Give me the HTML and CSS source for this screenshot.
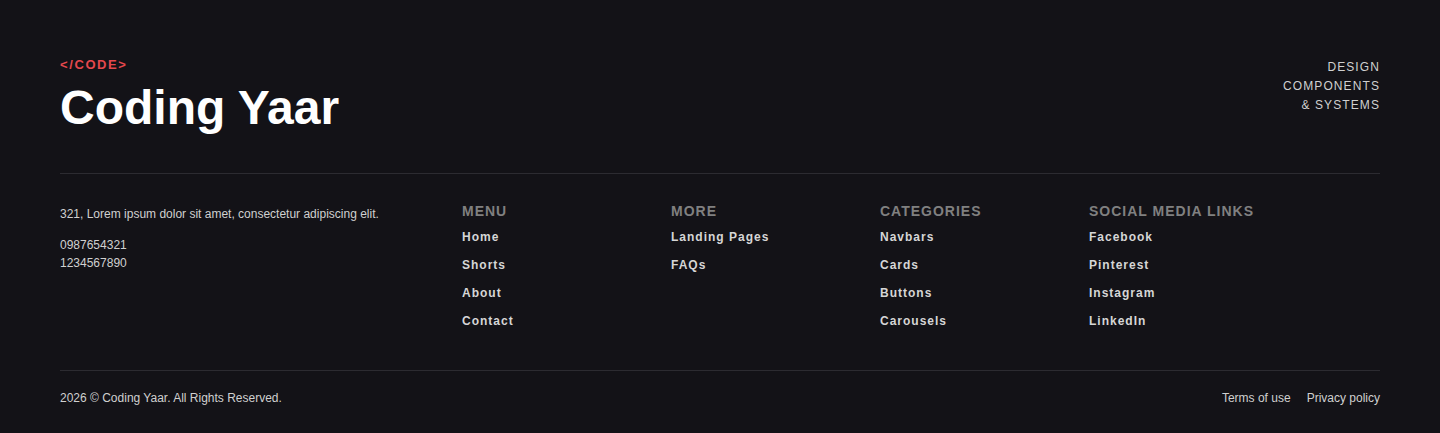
FILE: index.html
```html
<!DOCTYPE html>
<html lang="en">
<head>
<meta charset="utf-8">
<title>Coding Yaar Footer</title>
<link rel="stylesheet" href="styles.css">
</head>
<body>
<footer class="footer">
  <div class="top">
    <div class="brand">
      <div class="tag">&lt;/CODE&gt;</div>
      <div class="name">Coding Yaar</div>
    </div>
    <div class="tagline">DESIGN<br>COMPONENTS<br>&amp; SYSTEMS</div>
  </div>
  <hr class="rule">
  <div class="cols">
    <div class="contact">
      <p class="addr">321, Lorem ipsum dolor sit amet, consectetur adipiscing elit.</p>
      <p class="phones">0987654321<br>1234567890</p>
    </div>
    <div class="col">
      <h4>MENU</h4>
      <a>Home</a><a>Shorts</a><a>About</a><a>Contact</a>
    </div>
    <div class="col">
      <h4>MORE</h4>
      <a>Landing Pages</a><a>FAQs</a>
    </div>
    <div class="col">
      <h4>CATEGORIES</h4>
      <a>Navbars</a><a>Cards</a><a>Buttons</a><a>Carousels</a>
    </div>
    <div class="col">
      <h4>SOCIAL MEDIA LINKS</h4>
      <a>Facebook</a><a>Pinterest</a><a>Instagram</a><a>LinkedIn</a>
    </div>
  </div>
  <hr class="rule">
  <div class="bottom">
    <span>2026 © Coding Yaar. All Rights Reserved.</span>
    <div class="legal"><a>Terms of use</a><a>Privacy policy</a></div>
  </div>
</footer>
</body>
</html>
```
FILE: styles.css
```css
* { box-sizing: border-box; }
html, body { margin: 0; background: #131217; }
body { font-family: "Liberation Sans", Arial, sans-serif; color: #d4d4d4; }
.footer { padding: 57px 60px 0; height: 433px; }
.top { display: flex; justify-content: space-between; align-items: flex-start; }
.tag { color: #e5484d; font-size: 13px; font-weight: 700; letter-spacing: 1.6px; line-height: 15px; }
.name { color: #fff; font-size: 48px; font-weight: 700; line-height: 56px; margin-top: 8px; }
.tagline { text-align: right; font-size: 12px; letter-spacing: 1.1px; line-height: 19px; color: #d0d0d0; margin-top: 1px; }
.rule { border: 0; border-top: 1px solid #2c2b31; margin: 0; }
.top + .rule { margin-top: 37px; }
.cols { display: grid; grid-template-columns: 402fr 209fr 209fr 209fr 291fr; padding: 29px 0 35px; }
.contact p { margin: 0; font-size: 12px; line-height: 18px; color: #d0d0d0; }
.contact .addr { margin-top: 2px; margin-bottom: 13px; }
.col h4 { margin: 0 0 4px; font-size: 14px; line-height: 16px; letter-spacing: 1px; color: #808080; font-weight: 700; }
.col a { display: block; font-size: 12px; font-weight: 700; letter-spacing: 1px; line-height: 28px; color: #d6d6d6; }
.bottom { display: flex; justify-content: space-between; align-items: center; padding-top: 19px; font-size: 12px; color: #d0d0d0; line-height: 16px; }
.legal { display: flex; gap: 16px; }
```
